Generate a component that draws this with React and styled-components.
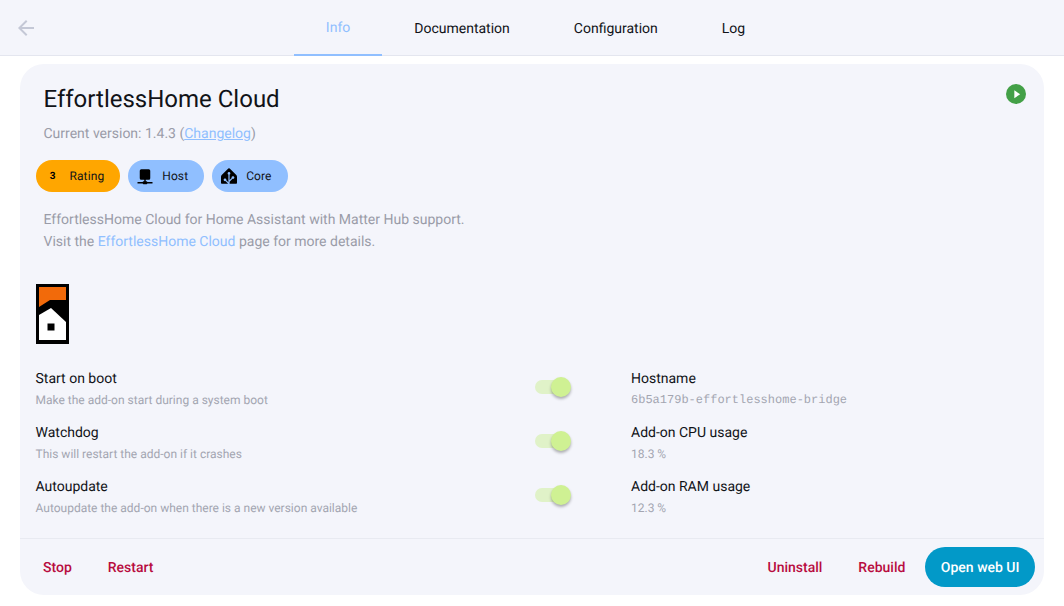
// Libraries
import React from "react";
import styled, { createGlobalStyle } from "styled-components";
import { SiHomeassistant } from "react-icons/si";

// Data
const TABS = [
    { label: "Info", active: true },
    { label: "Documentation" },
    { label: "Configuration" },
    { label: "Log" },
];

const OPTIONS = [
    { name: "Start on boot", hint: "Make the add-on start during a system boot" },
    { name: "Watchdog", hint: "This will restart the add-on if it crashes" },
    { name: "Autoupdate", hint: "Autoupdate the add-on when there is a new version available" },
];

const METRICS = [
    { name: "Hostname", value: "6b5a179b-effortlesshome-bridge", mono: true },
    { name: "Add-on CPU usage", value: "18.3 %" },
    { name: "Add-on RAM usage", value: "12.3 %" },
];

// mdi network
const HOST_ICON =
    "M15,20A1,1 0 0,0 14,19H13V17H17A2,2 0 0,0 19,15V5A2,2 0 0,0 17,3H7A2,2 0 0,0 5,5V15A2,2 0 0,0 7,17H11V19H10A1,1 0 0,0 9,20H2V22H9A1,1 0 0,0 10,23H14A1,1 0 0,0 15,22H22V20H15Z";

// Styled
const GlobalStyle = createGlobalStyle`
    html, body {
        margin: 0;
        background: #fff;
        font-family: Roboto, "Liberation Sans", sans-serif;
        text-rendering: geometricPrecision;
        -webkit-font-smoothing: antialiased;
    }
`;

const Page = styled.div`
    width: 1064px;
    height: 606px;
    overflow: hidden;
    background: #fff;
`;

const TopBar = styled.header`
    position: relative;
    height: 55px;
    display: flex;
    justify-content: center;
    padding-left: 7px;
    background: #f4f5fb;
    border-bottom: 1px solid #e4e6ef;
`;

const BackButton = styled.div`
    position: absolute;
    left: 14px;
    top: 16px;
    width: 24px;
    height: 24px;
    color: #c4c8d6;
`;

const Tab = styled.div`
    box-sizing: border-box;
    height: 56px;
    padding: ${(p) => (p.$active ? "2px 32px 0" : "4px 32px 0")};
    display: flex;
    align-items: center;
    font-size: 14px;
    color: ${(p) => (p.$active ? "#90bfff" : "#111318")};
    border-bottom: 2px solid ${(p) => (p.$active ? "#90bfff" : "transparent")};
`;

const Card = styled.main`
    box-sizing: border-box;
    width: 1024px;
    height: 531px;
    margin: 8px 20px 0;
    display: flex;
    flex-direction: column;
    position: relative;
    background: #f4f5fb;
    border-radius: 24px;
`;

const CardBody = styled.div`
    flex: 1;
    padding: 17px 16px 0;
`;

const Title = styled.h1`
    margin: 0 0 0 7.5px;
    font-size: 24px;
    line-height: 36px;
    font-weight: 400;
    color: #111318;
`;

const Version = styled.div`
    margin: 7px 0 0 7.5px;
    font-size: 14px;
    line-height: 20px;
    color: #9a9ca8;
`;

const Link = styled.a`
    color: #90bfff;
    text-decoration: ${(p) => (p.$underline ? "underline" : "none")};
`;

const StatusDot = styled.div`
    position: absolute;
    top: 20px;
    right: 18px;
    width: 20px;
    height: 20px;
    color: #43a047;
`;

const Chips = styled.div`
    display: flex;
    gap: 8px;
    margin-top: 16px;
`;

const Chip = styled.div`
    height: 32px;
    box-sizing: border-box;
    padding: 0 16px 0 8px;
    display: flex;
    align-items: center;
    gap: 8px;
    border-radius: 16px;
    font-size: 12px;
    letter-spacing: 0.1px;
    color: #111318;
    background: ${(p) => p.$bg};
`;

const ChipIcon = styled.svg`
    width: 18px;
    height: 18px;
    flex: none;
    fill: #000;
`;

const CoreIcon = styled(SiHomeassistant)`
    width: 16px;
    height: 16px;
    margin: 0 1px;
    flex: none;
    color: #000;
`;

const RatingNumber = styled.span`
    width: 17.5px;
    text-align: center;
    font-size: 10px;
    font-weight: 700;
    color: #000;
`;

const Description = styled.p`
    margin: 17px 0 0 7.5px;
    font-size: 14px;
    line-height: 22px;
    color: #9a9ca8;
`;

const Logo = styled.svg`
    display: block;
    width: 33px;
    height: 60px;
    margin-top: 31px;
`;

const Details = styled.div`
    display: grid;
    grid-template-columns: 595px 1fr;
    margin-top: 15px;
`;

const OptionColumn = styled.div`
    margin-left: -0.5px;
`;

const Row = styled.div`
    box-sizing: border-box;
    height: 54px;
    padding-top: 10px;
    display: flex;
    justify-content: space-between;
`;

const RowText = styled.div`
    font-size: 14px;
    line-height: 20px;
    color: #111318;
`;

const Hint = styled.div`
    margin-top: 2px;
    font-family: ${(p) => (p.$mono ? '"Liberation Mono", monospace' : "inherit")};
    font-size: 12px;
    line-height: 18px;
    color: #a3a5b1;
`;

const Switch = styled.div`
    position: relative;
    width: 32px;
    height: 14px;
    margin: 11px 64px 0 0;
    border-radius: 7px;
    background: #e0f2c8;
`;

const Thumb = styled.div`
    position: absolute;
    top: -3px;
    right: -4px;
    width: 20px;
    height: 20px;
    border-radius: 50%;
    background: #cff193;
    box-shadow: 0 2px 3px rgba(0, 0, 0, 0.3);
`;

const Footer = styled.footer`
    height: 57px;
    box-sizing: border-box;
    padding: 8px 9px 8px 7px;
    display: flex;
    align-items: center;
    justify-content: space-between;
    border-top: 1px solid #e8eaf1;
`;

const ButtonGroup = styled.div`
    display: flex;
    align-items: center;
    gap: 4px;
`;

const TextButton = styled.div`
    box-sizing: border-box;
    height: 40px;
    padding: 2px 16px 0;
    display: flex;
    align-items: center;
    font-size: 14px;
    font-weight: 500;
    color: #b80c40;
`;

const PrimaryButton = styled(TextButton)`
    padding: 2px 15.5px 0;
    border-radius: 20px;
    color: #fff;
    background: #0299c8;
`;

const App = () => {
    return (
        <Page>
            <GlobalStyle />
            <TopBar>
                <BackButton>
                    <svg viewBox="0 0 24 24" width="24" height="24" fill="currentColor">
                        <path d="M20 11H7.83l5.59-5.59L12 4l-8 8 8 8 1.41-1.41L7.83 13H20z" />
                    </svg>
                </BackButton>
                {TABS.map((tab) => (
                    <Tab key={tab.label} $active={tab.active}>
                        {tab.label}
                    </Tab>
                ))}
            </TopBar>
            <Card>
                <StatusDot>
                    <svg viewBox="0 0 24 24" width="20" height="20">
                        <circle cx="12" cy="12" r="12" fill="currentColor" />
                        <path d="M10 7.5v9.5l7-4.75z" fill="#fff" />
                    </svg>
                </StatusDot>
                <CardBody>
                    <Title>EffortlessHome Cloud</Title>
                    <Version>
                        Current version: 1.4.3 (<Link $underline>Changelog</Link>)
                    </Version>
                    <Chips>
                        <Chip $bg="#ffa600">
                            <RatingNumber>3</RatingNumber>
                            Rating
                        </Chip>
                        <Chip $bg="#90bfff">
                            <ChipIcon viewBox="0 0 24 24">
                                <path d={HOST_ICON} />
                            </ChipIcon>
                            Host
                        </Chip>
                        <Chip $bg="#90bfff">
                            <CoreIcon />
                            Core
                        </Chip>
                    </Chips>
                    <Description>
                        EffortlessHome Cloud for Home Assistant with Matter Hub support.
                        <br />
                        Visit the <Link>EffortlessHome Cloud</Link> page for more details.
                    </Description>
                    <Logo viewBox="0 0 33 60">
                        <rect width="33" height="60" fill="#000" />
                        <path d="M3 3h27v13H14L3 23z" fill="#f26a0a" />
                        <path d="M15 24 30 38v18H3V31z" fill="#fff" />
                        <rect x="11.5" y="39.5" width="7" height="7" fill="#000" />
                    </Logo>
                    <Details>
                        <OptionColumn>
                            {OPTIONS.map((option) => (
                                <Row key={option.name}>
                                    <RowText>
                                        {option.name}
                                        <Hint>{option.hint}</Hint>
                                    </RowText>
                                    <Switch>
                                        <Thumb />
                                    </Switch>
                                </Row>
                            ))}
                        </OptionColumn>
                        <div>
                            {METRICS.map((metric) => (
                                <Row key={metric.name}>
                                    <RowText>
                                        {metric.name}
                                        <Hint $mono={metric.mono}>{metric.value}</Hint>
                                    </RowText>
                                </Row>
                            ))}
                        </div>
                    </Details>
                </CardBody>
                <Footer>
                    <ButtonGroup>
                        <TextButton>Stop</TextButton>
                        <TextButton>Restart</TextButton>
                    </ButtonGroup>
                    <ButtonGroup>
                        <TextButton>Uninstall</TextButton>
                        <TextButton>Rebuild</TextButton>
                        <PrimaryButton>Open web UI</PrimaryButton>
                    </ButtonGroup>
                </Footer>
            </Card>
        </Page>
    );
};

export default App;
